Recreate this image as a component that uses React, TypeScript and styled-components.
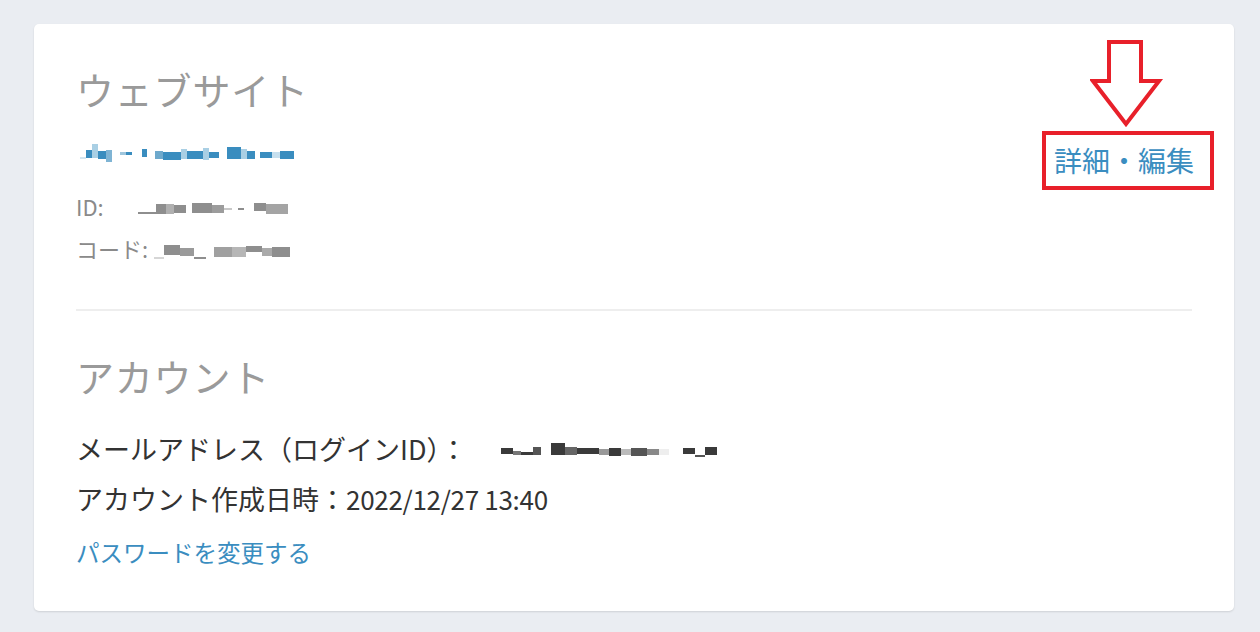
import React from "react";
import styled, { createGlobalStyle } from "styled-components";

const Global = createGlobalStyle`
  html, body { margin: 0; padding: 0; background: #eaedf2; }
  body { font-family: "Noto Sans CJK JP", "Noto Sans", sans-serif; }
`;

const Page = styled.div`
  padding: 24px 26px 21px 34px;
  min-height: 632px;
  box-sizing: border-box;
`;

const Card = styled.section`
  background: #fff;
  border-radius: 5px;
  box-shadow: 0 1px 2px rgba(0, 0, 0, 0.12);
  padding: 38px 42px 40px 42px;
  height: 587px;
  box-sizing: border-box;
`;

const Section = styled.div`
  display: flex;
  justify-content: space-between;
  align-items: flex-start;
`;

const Column = styled.div`
  display: flex;
  flex-direction: column;
`;

const Title = styled.h2`
  margin: 0;
  font-size: 38px;
  font-weight: 400;
  line-height: 53px;
  color: #9a9a9a;
  letter-spacing: 0.8px;
`;

const Meta = styled.div<{ $mt: number }>`
  display: flex;
  align-items: center;
  margin-top: ${(p) => p.$mt}px;
  font-size: 22px;
  line-height: 33px;
  color: #8a8a8a;
`;

const Info = styled.div<{ $mt: number }>`
  display: flex;
  align-items: center;
  margin-top: ${(p) => p.$mt}px;
  font-size: 27px;
  line-height: 40px;
  color: #333;
`;

const Stamp = styled.span`
  font-size: 26px;
  letter-spacing: -0.3px;
`;

const TextLink = styled.a<{ $size: number; $mt?: number }>`
  display: block;
  color: #3a8dc0;
  font-size: ${(p) => p.$size}px;
  line-height: 1.4;
  text-decoration: none;
  margin-top: ${(p) => p.$mt ?? 0}px;
  cursor: pointer;
`;

const Divider = styled.hr`
  border: 0;
  height: 2px;
  background: #eeeeee;
  margin: 44px 0 38px;
`;

const Action = styled.div`
  position: relative;
  margin-top: 79px;
  margin-right: -2px;
`;

const Callout = styled.div`
  position: absolute;
  left: -12px;
  top: -10px;
  width: 172px;
  height: 59px;
  border: 4px solid #e8202a;
  box-sizing: border-box;
  pointer-events: none;
`;

const ArrowSvg = styled.svg`
  position: absolute;
  left: 36px;
  top: -103px;
  pointer-events: none;
`;

const Smudge = styled.span<{ $ml: number; $h: number }>`
  display: inline-flex;
  align-items: center;
  margin-left: ${(p) => p.$ml}px;
  height: ${(p) => p.$h}px;
`;

const Bit = styled.span<{ $w: number; $c: string; $h: number; $y: number }>`
  display: inline-block;
  width: ${(p) => p.$w}px;
  height: ${(p) => p.$h}px;
  background: ${(p) => p.$c};
  transform: translateY(${(p) => p.$y}px);
`;

type Seg = [number, string, number, number];

const Redacted = ({ segs, ml, h }: { segs: Seg[]; ml: number; h: number }) => (
  <Smudge $ml={ml} $h={h}>
    {segs.map(([w, c, hh, y], i) => (
      <Bit key={i} $w={w} $c={c} $h={hh} $y={y} />
    ))}
  </Smudge>
);

const B = "#3a8dbf";
const LB = "#a9cfe4";
const W = "transparent";
const siteSegs: Seg[] = [
  [6, "#d4e6f1", 2, 5], [6, B, 8, 1], [6, LB, 14, -2], [8, B, 8, 2], [6, "#7fb4d4", 12, 3],
  [8, W, 2, 0], [6, "#9fc6dd", 3, 0], [6, B, 3, 0], [10, W, 2, 0], [5, B, 8, 0],
  [8, W, 2, 0], [8, "#6ea9cc", 8, 2], [18, B, 8, 3], [6, LB, 10, 1], [16, B, 8, 2],
  [6, LB, 12, 1], [10, B, 6, 2], [8, W, 2, 0], [14, B, 12, 0], [6, LB, 10, 1], [8, B, 8, 2],
  [5, W, 2, 0], [12, B, 6, 2], [8, "#c6dfee", 6, 2], [14, B, 8, 2],
];
const G = "#8e8e8e";
const LG = "#c8c8c8";
const idSegs: Seg[] = [
  [18, G, 2, 6], [10, G, 10, 2], [8, "#b0b0b0", 10, 2], [12, G, 8, 2], [6, W, 2, 0],
  [20, G, 10, 1], [12, "#9c9c9c", 8, 2], [8, LG, 2, 2], [6, W, 2, 0], [6, G, 2, 2],
  [10, W, 2, 0], [12, G, 8, 0], [22, "#a4a4a4", 10, 2],
];
const codeSegs: Seg[] = [
  [10, "#d6d6d6", 2, 9], [16, G, 10, 1], [14, "#9a9a9a", 8, 3], [12, G, 2, 9],
  [8, W, 2, 0], [18, "#a0a0a0", 10, 3], [14, "#b6b6b6", 10, 3], [16, G, 6, 0],
  [10, "#aaaaaa", 8, 3], [18, G, 10, 3],
];
const D = "#3a3a3a";
const mailSegs: Seg[] = [
  [12, D, 6, 2], [8, "#777", 4, 4], [12, D, 3, 4], [8, "#555", 8, 2], [10, W, 2, 0],
  [14, D, 12, 0], [12, "#666", 8, 2], [22, D, 6, 2], [10, "#999", 6, 3], [12, D, 8, 3],
  [10, "#bbb", 6, 3], [16, "#555", 8, 3], [12, "#888", 6, 3], [10, "#eee", 6, 3],
  [14, W, 2, 0], [12, D, 6, 2], [10, "#555", 2, 7], [12, D, 8, 2],
];

export default function App() {
  return (
    <>
      <Global />
      <Page>
        <Card>
          <Section>
            <Column>
              <Title>ウェブサイト</Title>
              <TextLink $size={20} $mt={17}>
                <Redacted segs={siteSegs} ml={4} h={20} />
              </TextLink>
              <Meta $mt={27}>
                ID:
                <Redacted segs={idSegs} ml={34} h={20} />
              </Meta>
              <Meta $mt={9}>
                コード:
                <Redacted segs={codeSegs} ml={6} h={22} />
              </Meta>
            </Column>
            <Action>
              <ArrowSvg width="74" height="92" viewBox="0 0 74 92">
                <path
                  d="M19 4 H51 V43 H69 L36 86 L3 43 H19 Z"
                  fill="none"
                  stroke="#e8202a"
                  strokeWidth="4"
                  strokeLinejoin="miter"
                />
              </ArrowSvg>
              <TextLink $size={28}>詳細・編集</TextLink>
              <Callout />
            </Action>
          </Section>
          <Divider />
          <Column>
            <Title>アカウント</Title>
            <Info $mt={27}>
              メールアドレス（ログインID）：
              <Redacted segs={mailSegs} ml={34} h={22} />
            </Info>
            <Info $mt={10}>
              アカウント作成日時：<Stamp>2022/12/27 13:40</Stamp>
            </Info>
            <TextLink $size={23.5} $mt={17}>パスワードを変更する</TextLink>
          </Column>
        </Card>
      </Page>
    </>
  );
}
